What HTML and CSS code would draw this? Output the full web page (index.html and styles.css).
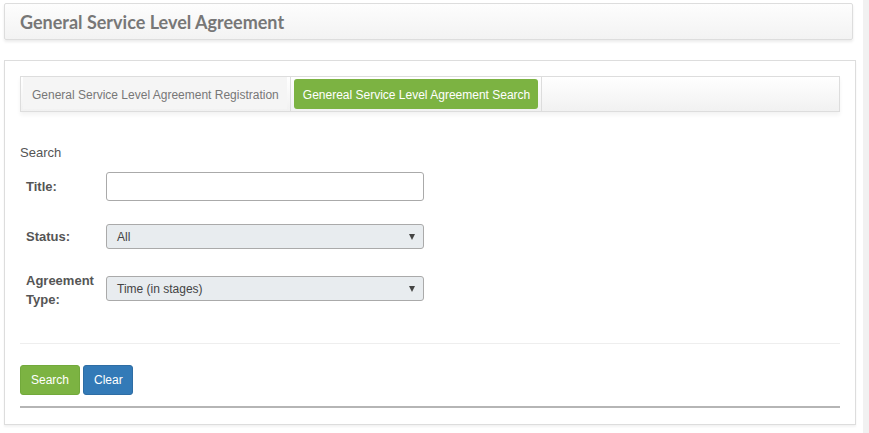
FILE: index.html
```html
<!DOCTYPE html>
<html>
<head>
<meta charset="utf-8">
<link rel="stylesheet" href="styles.css">
</head>
<body>
<div class="page">
  <div class="content">
    <div class="page-header"><h1>General Service Level Agreement</h1></div>
    <div class="panel">
      <ul class="tabs">
        <li class="tab"><a class="tab-link">General Service Level Agreement Registration</a></li>
        <li class="tab"><a class="tab-link active">Genereal Service Level Agreement Search</a></li>
      </ul>
      <div class="section-title">Search</div>
      <div class="form">
        <div class="row row-title">
          <label class="lbl">Title:</label>
          <input class="input" type="text">
        </div>
        <div class="row row-status">
          <label class="lbl">Status:</label>
          <div class="select"><span>All</span><span class="caret"></span></div>
        </div>
        <div class="row row-type">
          <label class="lbl">Agreement Type:</label>
          <div class="select"><span>Time (in stages)</span><span class="caret"></span></div>
        </div>
      </div>
      <div class="divider"></div>
      <div class="actions">
        <button class="btn btn-green">Search</button>
        <button class="btn btn-blue">Clear</button>
      </div>
      <div class="thick-line"></div>
    </div>
  </div>
  <div class="scroll-track"></div>
</div>
</body>
</html>
```
FILE: styles.css
```css
* { box-sizing: border-box; }
html, body { margin: 0; padding: 0; background: #fff; }
body { font-family: "Liberation Sans", Arial, sans-serif; font-size: 12px; color: #555; }
.page { display: flex; height: 433px; }
.content { flex: 1; padding-top: 3px; }
.scroll-track { width: 6px; background: #f1f1f1; }

.page-header {
  margin-left: 4px; width: 849px; height: 37px;
  border: 1px solid #ddd; border-radius: 2px;
  background: linear-gradient(#fdfdfd, #f3f3f3);
  box-shadow: 0 2px 3px rgba(0,0,0,0.08);
  display: flex; align-items: center; padding-left: 15px;
}
.page-header h1 {
  margin: 0; font-family: Lato, "Open Sans", sans-serif; font-weight: 700;
  font-size: 18px; color: #777; letter-spacing: 0;
}

.panel {
  margin: 20px 0 0 4px; width: 852px; height: 365px;
  border: 1px solid #ddd; padding: 15px;
  box-shadow: 0 2px 2px rgba(0,0,0,0.05);
}

.tabs {
  list-style: none; margin: 0; padding: 0 0 0 1px;
  height: 36px; border: 1px solid #ddd;
  background: linear-gradient(#fff, #f1f1f1);
  display: flex; box-shadow: 0 3px 4px rgba(0,0,0,0.05);
}
.tab { border-right: 1px solid #ddd; padding: 0 3px 2px 1px; display: flex; align-items: stretch; }
.tab:nth-child(2) { padding: 2px 3px 2px 3px; }
.tab-link {
  display: flex; align-items: center; padding: 3px 8px 0 9px;
  background: #f5f5f5; color: #777; font-size: 12px;
}
.tab-link.active {
  background: #7cb342; color: #fff; border-radius: 3px; padding: 1px 8px 0 9px;
}

.section-title { margin-top: 33px; font-size: 13px; color: #555; line-height: 15px; }

.form { margin-top: 12px; }
.row { display: flex; align-items: center; padding-left: 6px; }
.lbl { width: 80px; font-weight: bold; color: #555; font-size: 13px; line-height: 19px; }
.row-title { height: 29px; }
.row-status { margin-top: 23px; height: 25px; }
.row-type { margin-top: 27px; height: 25px; }
.row-type .lbl { width: 70px; margin-right: 10px; padding-top: 3px; }

.input {
  width: 318px; height: 29px; border: 1px solid #aaa; border-radius: 3px;
  background: #fff; margin: 0; padding: 0 8px;
}
.select {
  width: 318px; height: 25px; border: 1px solid #aaa; border-radius: 3px;
  background: #e8ecef; display: flex; align-items: center; justify-content: space-between;
  padding: 0 8px 0 10px; color: #444; font-size: 12px;
}
.caret {
  width: 0; height: 0; border-left: 3px solid transparent; border-right: 3px solid transparent;
  border-top: 6px solid #444;
}

.divider { margin-top: 42px; height: 1px; background: #eee; }
.actions { margin-top: 21px; display: flex; gap: 3px; }
.btn {
  height: 30px; border: 1px solid transparent; border-radius: 3px;
  color: #fff; font-family: "Liberation Sans", Arial, sans-serif; font-size: 12px;
  padding: 0 10px; margin: 0;
}
.btn-green { background: #7cb342; border-color: #72a93b; width: 60px; }
.btn-blue { background: #337ab7; border-color: #2e6da4; width: 50px; }
.thick-line { margin-top: 11px; height: 2px; background: #b5b5b5; }
```
